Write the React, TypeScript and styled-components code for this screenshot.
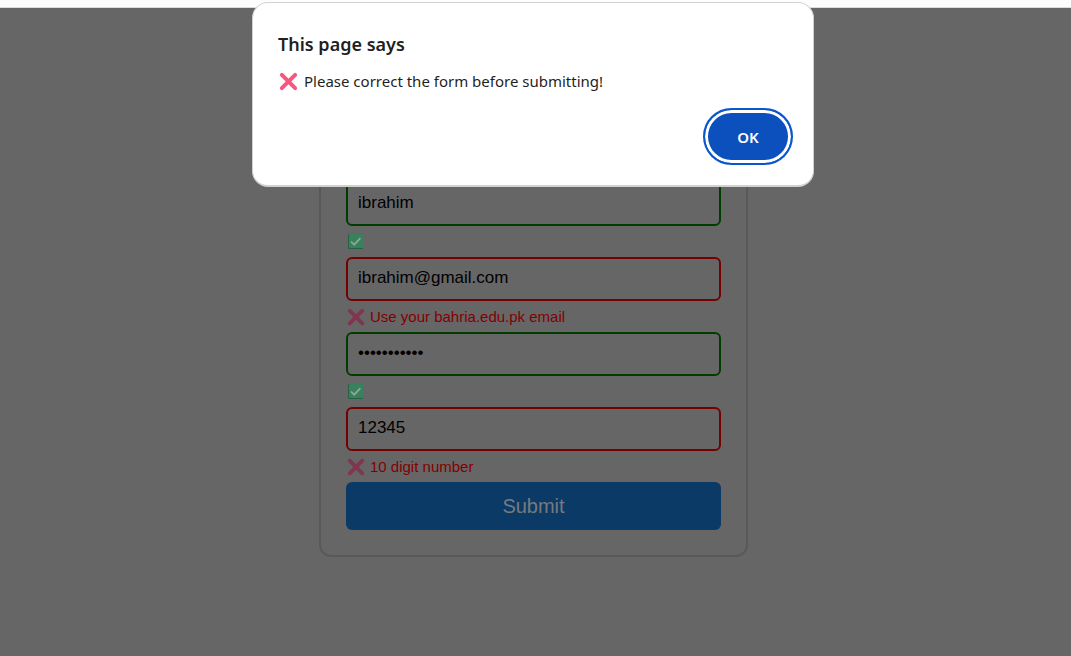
import React, { useState } from "react";
import styled, { createGlobalStyle } from "styled-components";

const GlobalStyle = createGlobalStyle`
  * { box-sizing: border-box; }
  body {
    margin: 0;
    background: #ffffff;
    font-family: "Liberation Sans", Arial, sans-serif;
  }
`;

const Page = styled.div`
  display: flex;
  flex-direction: column;
  min-height: 100vh;
`;

const TopEdge = styled.div`
  height: 8px;
  flex: none;
  background: #fdfdfd;
  border-bottom: 1px solid #dcdcdc;
`;

const Viewport = styled.main`
  flex: 1;
  display: flex;
  justify-content: center;
  align-items: flex-start;
  padding: 93px 4px 24px 0;
  background: #666666;
`;

const Card = styled.form`
  width: 100%;
  max-width: 429px;
  padding: 79px 25px 25px;
  border: 2px solid #595959;
  border-radius: 12px;
`;

const Field = styled.div`
  display: flex;
  flex-direction: column;
`;

const Input = styled.input<{ $valid: boolean }>`
  width: 100%;
  height: 44px;
  padding: 0 10px 2px;
  border: 2px solid ${(p) => (p.$valid ? "#003e00" : "#740000")};
  border-radius: 6px;
  outline: none;
  background: transparent;
  color: #000000;
  font-family: inherit;
  font-size: 17px;
`;

const Message = styled.div`
  display: flex;
  align-items: center;
  gap: 5px;
  height: 31px;
  padding-left: 1px;
  color: #840000;
  font-size: 15px;
`;

const Submit = styled.button`
  display: block;
  width: 100%;
  height: 48px;
  border: 0;
  border-radius: 6px;
  background: #0c3a66;
  color: #767a7e;
  font-family: inherit;
  font-size: 20px;
`;

const Overlay = styled.div`
  position: absolute;
  inset: 0 0 auto;
  display: flex;
  justify-content: center;
  padding: 2px 5px 0 0;
`;

const Dialog = styled.section`
  display: flex;
  flex-direction: column;
  width: 100%;
  max-width: 562px;
  padding: 27px 20px 20px 25px;
  border: 1px solid #d0d2d2;
  border-bottom-width: 2px;
  border-radius: 16px;
  background: #ffffff;
  color: #1f1f1f;
  font-family: "Noto Sans", "Segoe UI", sans-serif;
`;

const DialogTitle = styled.h1`
  margin: 0;
  font-size: 18px;
  font-weight: 600;
  line-height: 28px;
`;

const DialogText = styled.p`
  display: flex;
  align-items: center;
  gap: 6px;
  margin: 10px 0 14px;
  padding-left: 1px;
  font-size: 15px;
  line-height: 26px;
`;

const OkButton = styled.button`
  align-self: flex-end;
  width: 90px;
  height: 57px;
  padding: 0;
  border: 2px solid #0b57d0;
  border-radius: 29px;
  outline: none;
  background: #0b50bc;
  box-shadow: inset 0 0 0 3px #ffffff;
  color: #ffffff;
  font-family: inherit;
  font-size: 15px;
  font-weight: 600;
`;

const Cross = ({ color, size }: { color: string; size: number }) => (
  <svg width={size} height={size} viewBox="0 0 18 18" aria-hidden="true">
    <path d="M2.7 2.7 L15.3 15.3 M15.3 2.7 L2.7 15.3" stroke={color} strokeWidth="3.8" strokeLinecap="round" />
  </svg>
);

const Tick = () => (
  <svg width="17" height="17" viewBox="0 0 17 17" role="img" aria-label="Valid">
    <rect x="1" y="1" width="15" height="15" rx="1" fill="#285f46" />
    <rect x="2" y="1" width="14" height="14" rx="1" fill="#38815d" />
    <path d="M4 8.5 L7.2 11.7 L13.4 5.2" fill="none" stroke="#94a59d" strokeWidth="1.7" />
  </svg>
);

const fields = [
  { name: "name", label: "Name", type: "text", value: "ibrahim", error: "" },
  { name: "email", label: "Email", type: "email", value: "ibrahim@gmail.com", error: "Use your bahria.edu.pk email" },
  { name: "password", label: "Password", type: "password", value: "password123", error: "" },
  { name: "phone", label: "Phone", type: "tel", value: "12345", error: "10 digit number" },
];

export default function App() {
  const [open, setOpen] = useState(true);
  return (
    <Page>
      <GlobalStyle />
      <TopEdge />
      <Viewport>
        <Card
          noValidate
          onSubmit={(e) => {
            e.preventDefault();
            setOpen(true);
          }}
        >
          {fields.map((f) => (
            <Field key={f.name}>
              <Input
                type={f.type}
                name={f.name}
                aria-label={f.label}
                aria-describedby={`${f.name}-message`}
                defaultValue={f.value}
                $valid={!f.error}
              />
              <Message id={`${f.name}-message`}>
                {f.error ? (
                  <>
                    <Cross color="#80364e" size={18} />
                    {f.error}
                  </>
                ) : (
                  <Tick />
                )}
              </Message>
            </Field>
          ))}
          <Submit type="submit">Submit</Submit>
        </Card>
      </Viewport>
      {open && (
        <Overlay>
          <Dialog role="alertdialog" aria-labelledby="dialog-title" aria-describedby="dialog-text">
            <DialogTitle id="dialog-title">This page says</DialogTitle>
            <DialogText id="dialog-text">
              <Cross color="#f8557f" size={19} />
              Please correct the form before submitting!
            </DialogText>
            <OkButton type="button" onClick={() => setOpen(false)}>
              OK
            </OkButton>
          </Dialog>
        </Overlay>
      )}
    </Page>
  );
}
